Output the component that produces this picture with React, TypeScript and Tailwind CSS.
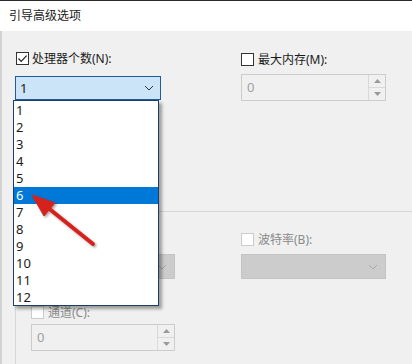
import React from "react";

const FONT = { fontFamily: "'Noto Sans', 'Noto Sans CJK SC', sans-serif" };

function Check({ checked, disabled }: { checked?: boolean; disabled?: boolean }) {
  return (
    <div
      className={
        "w-[13px] h-[13px] border flex items-center justify-center shrink-0 " +
        (disabled ? "border-[#cccccc] bg-white" : "border-[#333333] bg-white")
      }
    >
      {checked && (
        <svg width="11" height="11" viewBox="0 0 11 11">
          <path d="M1.5 5.5 L4.2 8.3 L9.6 2.6" fill="none" stroke="#222" strokeWidth="1.2" />
        </svg>
      )}
    </div>
  );
}

function Chevron({ color }: { color: string }) {
  return (
    <svg width="10" height="6" viewBox="0 0 10 6">
      <path d="M1 1 L5 5 L9 1" fill="none" stroke={color} strokeWidth="1" />
    </svg>
  );
}

function Spin({ width }: { width: string }) {
  return (
    <div className={"h-[27px] border border-[#cccccc] bg-[#f0f0f0] flex " + width}>
      <div className="flex-1 flex items-center pl-[5px] text-[13px] text-[#a0a0a0] leading-none">0</div>
      <div className="w-[17px] flex flex-col border-l border-[#d9d9d9]">
        <div className="flex-1 flex items-center justify-center border-b border-[#d9d9d9]">
          <svg width="7" height="4" viewBox="0 0 7 4">
            <path d="M0 4 L3.5 0 L7 4 Z" fill="#9a9a9a" />
          </svg>
        </div>
        <div className="flex-1 flex items-center justify-center">
          <svg width="7" height="4" viewBox="0 0 7 4">
            <path d="M0 0 L3.5 4 L7 0 Z" fill="#9a9a9a" />
          </svg>
        </div>
      </div>
    </div>
  );
}

function DisabledCombo({ width }: { width: string }) {
  return (
    <div className={"h-[25px] bg-[#cccccc] border border-[#c4c4c4] flex items-center justify-end pr-[7px] " + width}>
      <Chevron color="#a8a8a8" />
    </div>
  );
}

export default function App() {
  const items = ["1", "2", "3", "4", "5", "6", "7", "8", "9", "10", "11", "12"];
  return (
    <div className="w-[412px] h-[364px] relative overflow-hidden bg-[#f0f0f0] text-[#1a1a1a]" style={FONT}>
      {/* header */}
      <div className="h-[31px] bg-white flex items-center pl-[9px] border-t border-[#2a2a2a]">
        <span className="text-[12px] leading-none text-[#1a1a1a]">引导高级选项</span>
      </div>

      {/* body */}
      <div className="pl-[13px] border-l-2 border-[#d2d2d2] h-[333px]">
        <div className="flex pt-[21px]">
          <div className="w-[146px] flex flex-col">
            <div className="flex items-center h-[13px] ml-[1px]">
              <Check checked />
              <span className="ml-[3px] text-[12px] leading-none">处理器个数(N):</span>
            </div>
            <div className="mt-[11px] h-[24px] bg-[#cce4f7] border border-[#1f5c99] flex items-center justify-between pl-[4px] pr-[6px]">
              <span className="text-[13px] leading-none">1</span>
              <Chevron color="#333333" />
            </div>
          </div>
          <div className="ml-[80px] w-[145px] flex flex-col">
            <div className="flex items-center h-[13px] mt-[1px]">
              <Check />
              <span className="ml-[4px] text-[12px] leading-none">最大内存(M):</span>
            </div>
            <div className="mt-[8px]">
              <Spin width="w-[145px]" />
            </div>
          </div>
        </div>

        {/* group box */}
        <div className="mt-[110px] border-t border-l border-[#d7d7d7] h-[200px] pl-[15px] pt-[21px]">
          <div className="flex">
            <div className="w-[144px] flex flex-col">
              <div className="flex items-center h-[13px]">
                <Check disabled />
                <span className="ml-[4px] text-[12px] leading-none text-[#8a8a8a]">数据位(D):</span>
              </div>
              <div className="mt-[8px]">
                <DisabledCombo width="w-[144px]" />
              </div>
              <div className="flex items-center h-[13px] mt-[27px]">
                <Check disabled />
                <span className="ml-[4px] text-[12px] leading-none text-[#8a8a8a]">通道(C):</span>
              </div>
              <div className="mt-[5px]">
                <Spin width="w-[144px]" />
              </div>
            </div>
            <div className="ml-[66px] w-[145px] flex flex-col">
              <div className="flex items-center h-[13px]">
                <Check disabled />
                <span className="ml-[4px] text-[12px] leading-none text-[#8a8a8a]">波特率(B):</span>
              </div>
              <div className="mt-[8px]">
                <DisabledCombo width="w-[145px]" />
              </div>
            </div>
          </div>
        </div>
      </div>

      {/* dropdown list */}
      <div className="absolute left-[13px] top-[100px] w-[146px] h-[206px] bg-white border border-[#1b3f66] shadow-[3px_3px_3px_rgba(0,0,0,0.35)] pt-[1px]">
        {items.map((it) => (
          <div
            key={it}
            className={
              "h-[17px] flex items-center pl-[2px] text-[13px] leading-none " +
              (it === "6" ? "bg-[#0078d7] text-white" : "text-[#1a1a1a]")
            }
          >
            {it}
          </div>
        ))}
      </div>

      {/* red arrow */}
      <svg className="absolute left-0 top-0 pointer-events-none" width="412" height="364" viewBox="0 0 412 364">
        <defs>
          <filter id="sh" x="-20%" y="-20%" width="140%" height="140%">
            <feDropShadow dx="1.5" dy="1.5" stdDeviation="1.2" floodColor="#000" floodOpacity="0.35" />
          </filter>
        </defs>
        <g filter="url(#sh)">
          <line x1="93" y1="244" x2="47" y2="207" stroke="#d4221e" strokeWidth="4" strokeLinecap="round" />
          <path d="M32 195 L55 203 L44 216 Z" fill="#d4221e" stroke="#d4221e" strokeWidth="1" strokeLinejoin="round" />
        </g>
      </svg>
    </div>
  );
}
